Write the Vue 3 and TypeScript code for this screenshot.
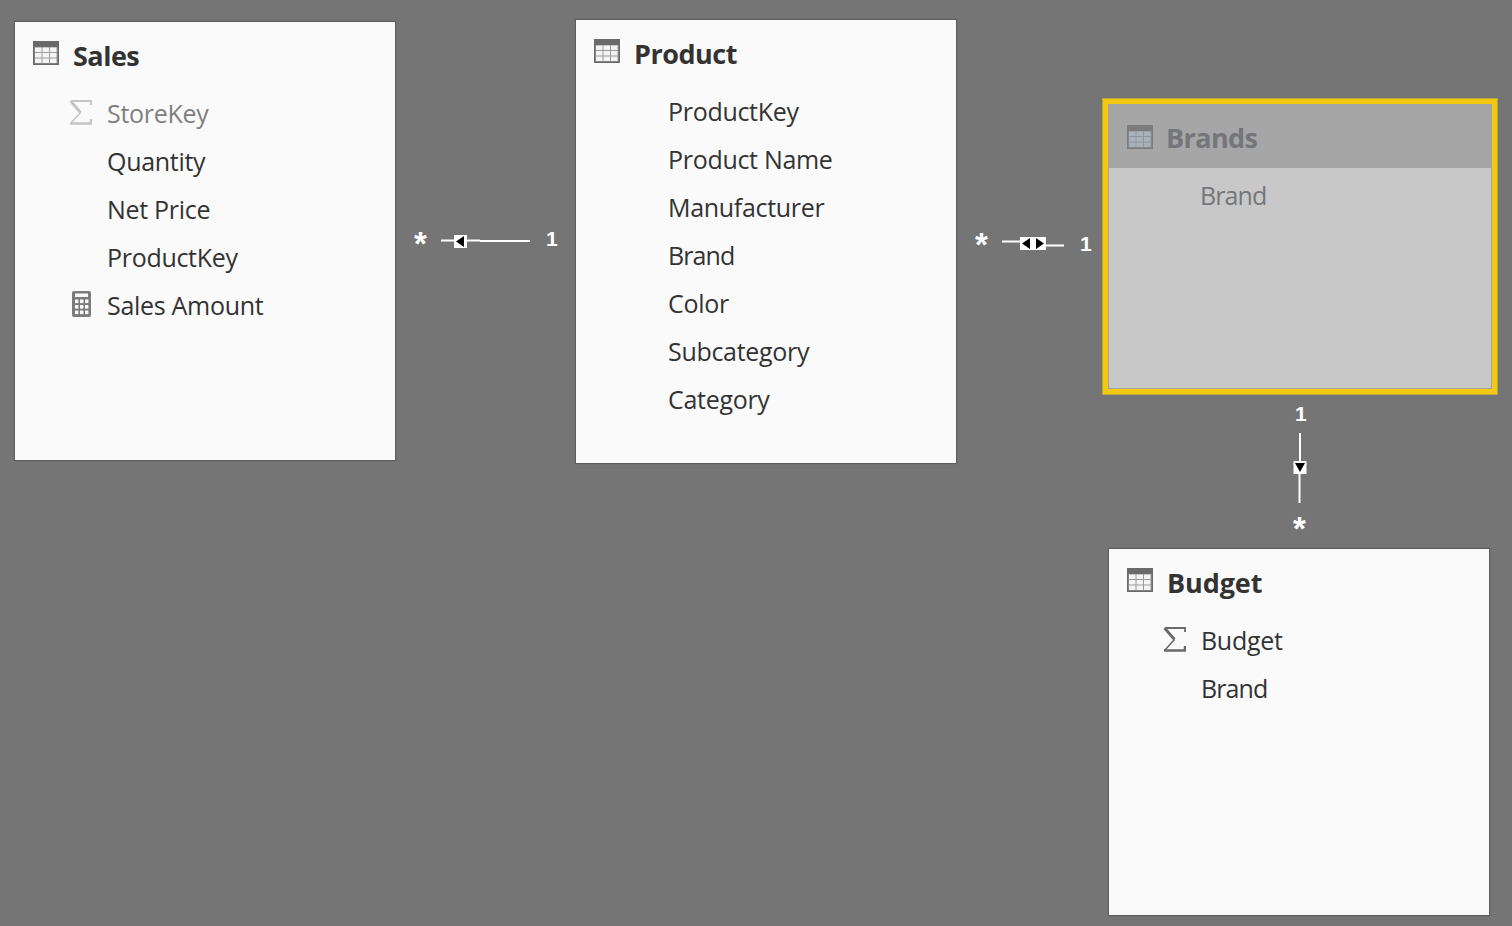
<script setup lang="ts">
type Icon = 'sigma' | 'calc' | '';
interface Field { name: string; icon: Icon; dim?: boolean; tight?: boolean }
interface Table { title: string; key: string; fields: Field[]; selected?: boolean }

const tables: Table[] = [
  { title: 'Sales', key: 'sales', fields: [
    { name: 'StoreKey', icon: 'sigma', dim: true },
    { name: 'Quantity', icon: '' },
    { name: 'Net Price', icon: '' },
    { name: 'ProductKey', icon: '' },
    { name: 'Sales Amount', icon: 'calc' },
  ] },
  { title: 'Product', key: 'product', fields: [
    { name: 'ProductKey', icon: '' },
    { name: 'Product Name', icon: '' },
    { name: 'Manufacturer', icon: '' },
    { name: 'Brand', icon: '', tight: true },
    { name: 'Color', icon: '' },
    { name: 'Subcategory', icon: '' },
    { name: 'Category', icon: '' },
  ] },
  { title: 'Brands', key: 'brands', selected: true, fields: [{ name: 'Brand', icon: '', tight: true }] },
  { title: 'Budget', key: 'budget', fields: [
    { name: 'Budget', icon: 'sigma' },
    { name: 'Brand', icon: '', tight: true },
  ] },
];

const gridCells = [0, 1, 2, 3, 4, 5, 6, 7, 8].map((i) => ({
  x: 2 + (i % 3) * 7.500,
  y: 6.500 + Math.floor(i / 3) * 5.500,
}));
const calcKeys = [0, 1, 2, 3, 4, 5, 6, 7, 8].map((i) => ({
  x: 3 + (i % 3) * 5,
  y: 8.500 + Math.floor(i / 3) * 5.500,
}));
</script>

<template>
  <main class="canvas">
    <section
      v-for="t in tables"
      :key="t.key"
      class="table"
      :class="[t.key, { selected: t.selected }]"
    >
      <header class="head">
        <svg class="grid-icon" width="26" height="24" viewBox="0 0 26 24">
          <rect width="26" height="24" fill="currentColor" />
          <rect class="lines" x="1.500" y="6" width="23" height="16.500" />
          <rect v-for="(c, i) in gridCells" :key="i" class="cell" :x="c.x" :y="c.y" width="6.500" height="4.500" />
        </svg>
        <h2>{{ t.title }}</h2>
      </header>
      <ul class="fields">
        <li v-for="f in t.fields" :key="f.name" :class="{ dim: f.dim, tight: f.tight }">
          <span class="slot">
            <svg v-if="f.icon === 'sigma'" class="sigma" width="23" height="25" viewBox="0 0 23 25" fill="none" stroke="currentColor">
              <path d="M22 5V1H2" stroke-width="1.800" />
              <path d="M1.500 1L11.500 12.500" stroke-width="2.800" />
              <path d="M11.500 12.500L2 23" stroke-width="1.600" />
              <path d="M1 23.500H22V19" stroke-width="2.400" />
            </svg>
            <svg v-else-if="f.icon === 'calc'" class="calc" width="19" height="26" viewBox="0 0 19 26">
              <rect width="19" height="26" rx="2" fill="#7c7c7c" />
              <rect x="3" y="2.500" width="13" height="3.500" fill="#fafafa" />
              <rect v-for="(k, i) in calcKeys" :key="i" :x="k.x" :y="k.y" width="3.400" height="3.600" fill="#fafafa" />
            </svg>
          </span>
          {{ f.name }}
        </li>
      </ul>
    </section>

    <!-- Relationship Sales * — 1 Product -->
    <span class="mark star" style="left: 414px; top: 232px">*</span>
    <span class="mark one" style="left: 546px; top: 227px">1</span>
    <svg class="rel" style="left: 440px; top: 232px" width="92" height="18" viewBox="0 0 92 18">
      <path d="M1 8.500H40" stroke="#fff" stroke-width="2" />
      <path d="M40 9H90" stroke="#fff" stroke-width="2" />
      <rect x="14" y="3" width="13" height="13" fill="#fff" />
      <path d="M16 9.500l8-5.500v11z" fill="#000" />
    </svg>

    <!-- Relationship Product * — 1 Brands -->
    <span class="mark star" style="left: 975px; top: 233px">*</span>
    <span class="mark one" style="left: 1080px; top: 232px">1</span>
    <svg class="rel" style="left: 1001px; top: 234px" width="65" height="18" viewBox="0 0 65 18">
      <path d="M1 7.500H22M44 11.500H63" stroke="#fff" stroke-width="2" />
      <rect x="19" y="3" width="26" height="13" fill="#fff" />
      <path d="M21 9.500l8-5.500v11zM43 9.500l-8-5.500v11z" fill="#000" />
    </svg>

    <!-- Relationship Brands 1 — * Budget -->
    <span class="mark one" style="left: 1295px; top: 402px">1</span>
    <span class="mark star" style="left: 1293px; top: 517px">*</span>
    <svg class="rel" style="left: 1292px; top: 432px" width="16" height="72" viewBox="0 0 16 72">
      <path d="M8 1V35" stroke="#fff" stroke-width="2" />
      <path d="M7.500 35V71" stroke="#fff" stroke-width="2" />
      <rect x="1.500" y="29" width="13" height="13" fill="#fff" />
      <path d="M3 31h10l-5 9z" fill="#000" />
    </svg>
  </main>
</template>

<style>
html, body { margin: 0; background: #757575; }
</style>

<style scoped>
.canvas {
  position: relative;
  width: 1512px;
  height: 926px;
  overflow: hidden;
  background: #757575;
  font-family: "Open Sans", "Noto Sans", sans-serif;
}
.table {
  position: absolute;
  box-sizing: border-box;
  background: #fafafa;
  border: 1px solid #5e5e5e;
  box-shadow: 0 0 1px #5a5a5a;
  color: #333;
}
.sales { left: 14px; top: 21px; width: 382px; height: 440px; }
.product { left: 575px; top: 19px; width: 382px; height: 445px; }
.budget { left: 1108px; top: 548px; width: 382px; height: 368px; }
.brands {
  left: 1102px; top: 98px; width: 396px; height: 297px;
  border: 6px solid #f2c811;
  outline: 1px solid #b8a83a;
  outline-offset: -1px;
  box-shadow: inset 0 0 0 1px #a6a69c;
  background: #c8c8c8;
  color: #74767a;
}
.head {
  display: flex;
  align-items: center;
  gap: 14px;
  height: 66px;
  padding-left: 18px;
}
.brands .head { background: #a6a6a6; height: 64px; padding-left: 19px; }
.grid-icon { color: #6a6a6a; flex: none; margin-top: -4px; }
.lines { fill: #9c9c9c; }
.cell { fill: #f4f4f4; }
.brands .grid-icon { color: #7b7b7b; margin-top: 1px; }
.brands .lines { fill: #8f979f; }
.brands .cell { fill: #a9b2ba; }
.brands h2 { padding-top: 2px; margin-left: -1px; letter-spacing: -0.6px; }
h2 {
  margin: 0;
  font-size: 27px;
  font-weight: 700;
  letter-spacing: -0.5px;
}
.budget h2 { letter-spacing: -0.1px; }
.fields { list-style: none; margin: 0; padding: 1px 0 0 54px; font-size: 25px; }
.brands .fields { padding: 3px 0 0 54px; }
.fields li {
  display: flex;
  align-items: center;
  height: 48px;
  letter-spacing: -0.3px;
}
.fields li.tight { letter-spacing: -0.9px; }
.slot {
  display: inline-flex;
  align-items: center;
  justify-content: center;
  width: 38px;
  color: #6a6a6a;
}
.sigma { margin: -1px 0 0 -15px; }
.calc { margin: -2px 0 0 -14px; }
.dim { color: #808080; }
.dim .slot { color: #c4c4c4; }
.mark {
  position: absolute;
  color: #fff;
  font-family: "Liberation Sans", sans-serif;
  font-weight: 700;
  line-height: 24px;
}
.star { font-size: 33px; }
.one { font-size: 21px; }
.rel { position: absolute; }
</style>
